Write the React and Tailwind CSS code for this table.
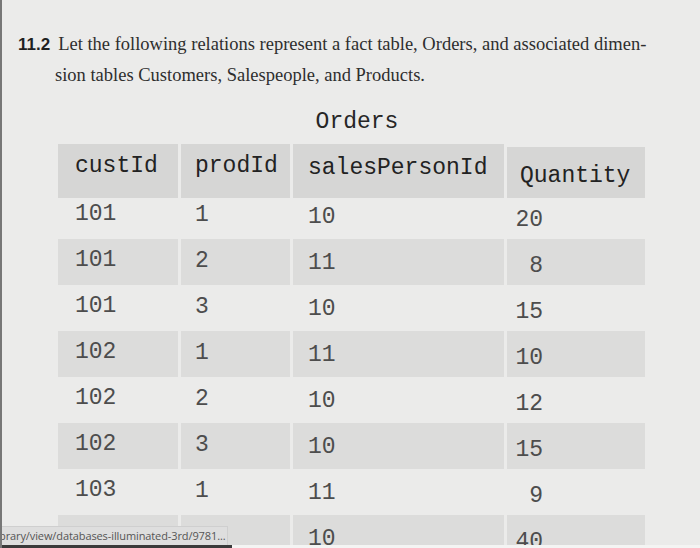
import React from 'react';

// Orders fact table, as printed in the textbook
const rows = [
    ['101', '1', '10', '20'],
    ['101', '2', '11', '8'],
    ['101', '3', '10', '15'],
    ['102', '1', '11', '10'],
    ['102', '2', '10', '12'],
    ['102', '3', '10', '15'],
    ['103', '1', '11', '9'],
    ['103', '2', '10', '40'],
];

const mono = "font-['Liberation_Mono','DejaVu_Sans_Mono',monospace]";

const Row = ({ cells, shaded }) => {
    const bg = shaded ? 'bg-[#dcdcdb]' : 'bg-transparent';
    return (
        <div className={`grid grid-cols-[120px_109px_211px_138px] gap-x-[3px] h-[46px] ${mono} text-[23px] leading-[32px] text-[#4d4d4d]`}>
            <div className={`${bg} pl-[17px] pt-[5px]`}>{cells[0]}</div>
            <div className={`${bg} pl-[14px] pt-[6px]`}>{cells[1]}</div>
            <div className={`${bg} pl-[15px] pt-[8px]`}>{cells[2]}</div>
            <div className={`${bg} pr-[102px] pt-[11px] text-right`}>{cells[3]}</div>
        </div>
    );
};

const App = () => {
    return (
        <div className="relative w-[700px] h-[548px] overflow-hidden bg-[#ebebea] border-l-2 border-[#777]">
            {/* Énoncé de l'exercice */}
            <div className="pt-[29px] pl-[16px] pr-2 font-['Liberation_Serif',serif] text-[18.5px] leading-[30px] text-[#2e2e2e]">
                <p className="whitespace-nowrap">
                    <span className="font-['Liberation_Sans',sans-serif] font-bold text-[17px] text-[#1f1f1f] mr-[8px]">11.2</span>
                    Let the following relations represent a fact table, Orders, and associated dimen-
                </p>
                <p className="pl-[37px]">sion tables Customers, Salespeople, and Products.</p>
            </div>

            <h2 className={`mt-[18px] text-center ${mono} text-[23px] leading-[28px] text-[#262626] pl-[12px]`}>Orders</h2>

            {/* Table Orders */}
            <div className="mt-[8px] ml-[56px]">
                <div className={`grid grid-cols-[120px_109px_211px_138px] gap-x-[3px] h-[49px] ${mono} text-[23px] leading-[44px] text-[#222]`}>
                    <div className="bg-[#d6d6d5] pl-[17px]">custId</div>
                    <div className="bg-[#d6d6d5] pl-[14px]">prodId</div>
                    <div className="bg-[#d6d6d5] pl-[15px] pt-[2px]">salesPersonId</div>
                    <div className="bg-[#d6d6d5] pl-[13px] pt-[7px] mt-[3px]">Quantity</div>
                </div>
                {rows.map((r, i) => (
                    <Row key={i} cells={r} shaded={i % 2 === 1} />
                ))}
            </div>

            {/* Barre d'état du navigateur */}
            <div className="absolute left-0 bottom-[3px] w-[226px] h-[19px] overflow-hidden bg-[#dedede] border-t border-r border-[#cfcfcf] font-['Open_Sans',sans-serif] text-[11px] leading-[18px] tracking-[-0.1px] text-[#555]">
                <span className="ml-[-3px] whitespace-nowrap">prary/view/databases-illuminated-3rd/9781...</span>
            </div>
            <div className="absolute left-0 bottom-0 w-[230px] h-[3px] bg-[#3a3a3a]" />
            <div className="absolute left-[230px] bottom-0 right-0 h-[3px] bg-[#f4f4f3]" />
        </div>
    );
};

export default App;
